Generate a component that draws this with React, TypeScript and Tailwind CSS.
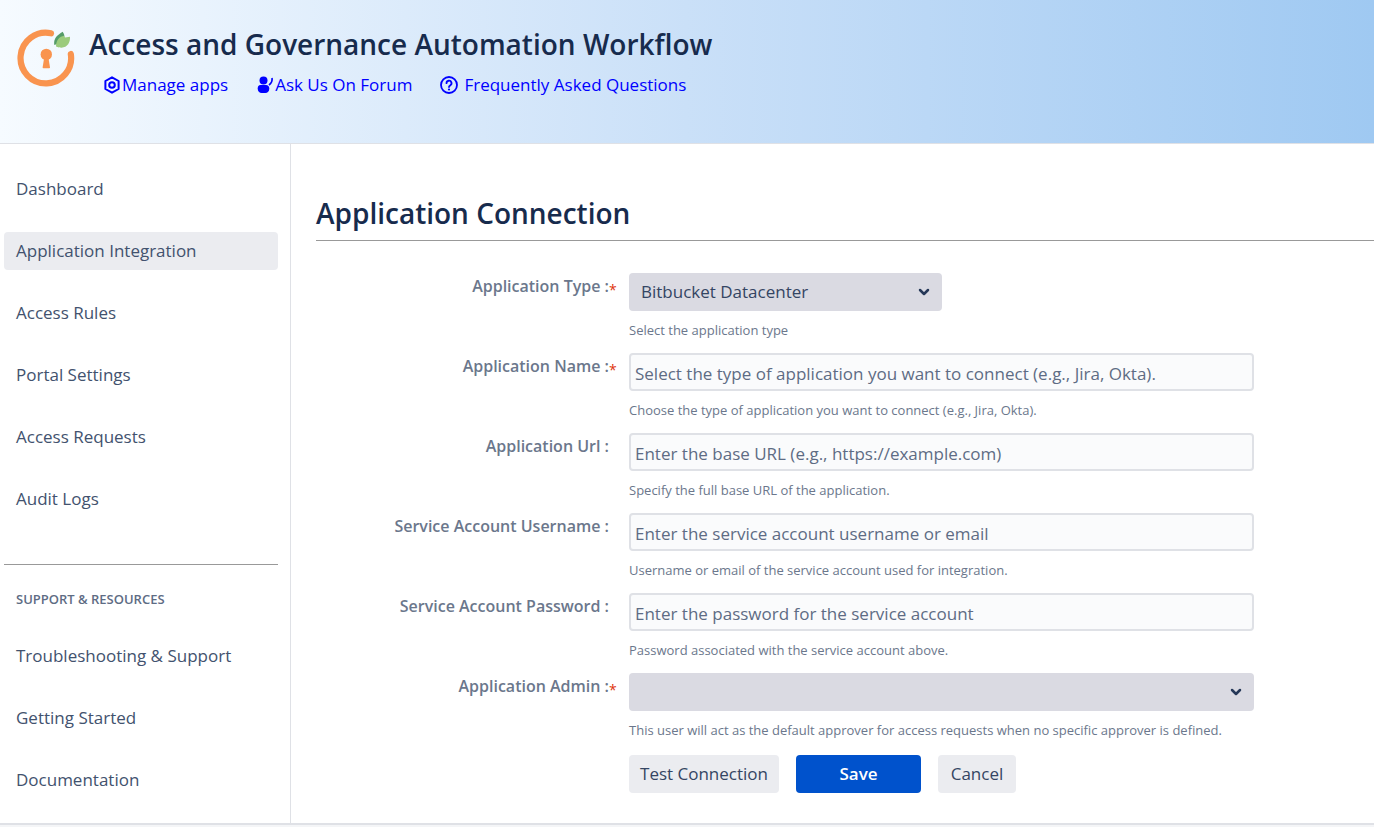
import React from "react";

const mainLinks = [
  "Dashboard",
  "Application Integration",
  "Access Rules",
  "Portal Settings",
  "Access Requests",
  "Audit Logs",
];

const supportLinks = [
  "Troubleshooting & Support",
  "Getting Started",
  "Documentation",
];

const Logo = () => (
  <svg width="58" height="58" viewBox="0 0 58 58" fill="none" aria-hidden="true">
    <path
      d="M34 4.300A25.300 25.300 0 1 0 53.800 25"
      stroke="#f9944f"
      strokeWidth="6.200"
      strokeLinecap="round"
    />
    <circle cx="29.300" cy="25.400" r="5.700" fill="#f9944f" />
    <path d="M27.300 28h4l1.700 10.600q0 .7-.8.700h-5.800q-.8 0-.8-.7z" fill="#f9944f" />
    <path d="M37.300 16C36.200 9.500 40 6.500 45.700 2.800C49.500 8 47 13 37.300 16Z" fill="#559c68" />
    <path d="M39 17.500C39 11 42.500 7.500 47 6.800L48 8.500L53 7.800C53.500 14.500 49 21.500 39 17.500Z" fill="#9bcb7c" />
  </svg>
);

const GearIcon = () => (
  <svg width="18" height="18" viewBox="0 0 18 18" fill="none" stroke="currentColor" strokeWidth="2" strokeLinejoin="round" aria-hidden="true">
    <path d="M9 1.300L15.600 5v8L9 16.700L2.400 13V5z" />
    <circle cx="9" cy="9" r="2.800" />
  </svg>
);

const PersonIcon = () => (
  <svg width="18" height="18" viewBox="0 0 18 18" fill="currentColor" aria-hidden="true">
    <circle cx="7.500" cy="4.500" r="4" />
    <path d="M4.500 9h5.500c2 0 3.300 1.500 3.300 3.400 0 2.800-1.600 4.600-4 4.600H5.700c-2.400 0-4-1.800-4-4.600C1.700 10.500 2.600 9 4.500 9z" />
    <path d="M16 2c.5 3-.6 5.200-3 7" fill="none" stroke="currentColor" strokeWidth="1.700" />
  </svg>
);

const QuestionIcon = () => (
  <svg width="18" height="18" viewBox="0 0 18 18" fill="none" stroke="currentColor" strokeWidth="1.800" aria-hidden="true">
    <circle cx="9" cy="9" r="8" />
    <path d="M6.500 7.200a2.500 2.500 0 1 1 3.700 2.200c-.8.5-1.200.8-1.200 1.700" strokeLinecap="round" />
    <circle cx="9" cy="13.500" r="1.100" fill="currentColor" stroke="none" />
  </svg>
);

const Chevron = () => (
  <svg
    className="pointer-events-none absolute right-3 top-1/2 -translate-y-1/2 text-[#253858]"
    width="12"
    height="10"
    viewBox="0 0 12 10"
    fill="none"
    stroke="currentColor"
    strokeWidth="2.500"
    strokeLinecap="round"
    strokeLinejoin="round"
    aria-hidden="true"
  >
    <path d="M2 3L6 7L10 3" />
  </svg>
);

type FieldProps = {
  id: string;
  label: string;
  help: string;
  required?: boolean;
  children: React.ReactNode;
};

const Field = ({ id, label, help, required, children }: FieldProps) => (
  <div className="flex gap-3">
    <div className="flex w-[301px] shrink-0 justify-end pt-px text-[#6b778c]">
      <label htmlFor={id} className="text-base leading-6 font-semibold">
        {label} :
      </label>
      <span className="w-2 pt-1 text-sm leading-6 text-[#de350b]">
        {required && "*"}
      </span>
    </div>
    <div className="max-w-[625px] flex-1">
      {children}
      <p className="mt-[6px] mb-[10px] text-[13px] leading-[26px] text-[#6b778c]">{help}</p>
    </div>
  </div>
);

const inputClass =
  "block h-[38px] w-full rounded-[4px] border-2 border-[#dfe1e6] bg-[#fafbfc] px-1 pt-0.5 text-[17px] text-[#172b4d] placeholder:text-[#5e6c84]";
const selectClass =
  "block h-[38px] w-full appearance-none rounded-[4px] bg-[#dadae2] px-3 text-[17px] text-[#344563]";

const SideLink = ({ text, active }: { text: string; active?: boolean }) => (
  <a
    href="#"
    className={
      active
        ? "block rounded-[4px] bg-[#ebecf0] px-3 text-[17px] leading-[38px] text-[#42526e]"
        : "block rounded-[4px] px-3 text-[17px] leading-[38px] text-[#42526e]"
    }
  >
    {text}
  </a>
);

const App = () => {
  return (
    <div className="flex min-h-screen flex-col bg-[#f4f5f7] font-['Segoe_UI','Open_Sans',sans-serif]">
      <header className="flex h-36 gap-[14px] border-b border-[#dfe1e6] bg-linear-to-r from-[#f6fbff] via-[#cae0f8] to-[#9fc9f2] px-[17px] pt-[29px]">
        <Logo />
        <div>
          <h1 className="text-[28px] leading-[30px] font-semibold text-[#172b4d]">
            Access and Governance Automation Workflow
          </h1>
          <nav className="flex gap-7 pt-[14px] pl-[14px] text-[17px] leading-6 text-[#0000ff]">
            <a href="#" className="flex items-center gap-px">
              <GearIcon />
              Manage apps
            </a>
            <a href="#" className="flex items-center gap-px">
              <PersonIcon />
              Ask Us On Forum
            </a>
            <a href="#" className="flex items-center gap-[6px]">
              <QuestionIcon />
              Frequently Asked Questions
            </a>
          </nav>
        </div>
      </header>

      <div className="flex border-b-2 border-[#dfe1e6] bg-white">
        <aside className="w-[291px] shrink-0 border-r border-[#dfe1e6] pt-[26px] pr-3 pb-6 pl-1">
          <nav className="flex flex-col gap-6">
            {mainLinks.map((text) => (
              <SideLink key={text} text={text} active={text === "Application Integration"} />
            ))}
          </nav>
          <hr className="mt-[46px] border-[#999999]" />
          <h2 className="px-3 pt-[22px] text-[13px] leading-6 font-semibold text-[#5e6c84]">
            SUPPORT & RESOURCES
          </h2>
          <nav className="flex flex-col gap-6 pt-[26px]">
            {supportLinks.map((text) => (
              <SideLink key={text} text={text} />
            ))}
          </nav>
        </aside>

        <main className="flex-1 pt-[52px] pl-[25px]">
          <h2 className="border-b border-[#999999] pb-[10px] text-[28px] leading-[34px] font-semibold text-[#172b4d]">
            Application Connection
          </h2>
          <form className="pt-8">
            <Field id="type" label="Application Type" help="Select the application type" required>
              <div className="relative w-1/2">
                <select id="type" className={selectClass}>
                  <option>Bitbucket Datacenter</option>
                </select>
                <Chevron />
              </div>
            </Field>
            <Field
              id="name"
              label="Application Name"
              help="Choose the type of application you want to connect (e.g., Jira, Okta)."
              required
            >
              <input
                id="name"
                type="text"
                placeholder="Select the type of application you want to connect (e.g., Jira, Okta)."
                className={inputClass}
              />
            </Field>
            <Field id="url" label="Application Url" help="Specify the full base URL of the application.">
              <input
                id="url"
                type="text"
                placeholder="Enter the base URL (e.g., https://example.com)"
                className={inputClass}
              />
            </Field>
            <Field
              id="username"
              label="Service Account Username"
              help="Username or email of the service account used for integration."
            >
              <input
                id="username"
                type="text"
                placeholder="Enter the service account username or email"
                className={inputClass}
              />
            </Field>
            <Field
              id="password"
              label="Service Account Password"
              help="Password associated with the service account above."
            >
              <input
                id="password"
                type="password"
                placeholder="Enter the password for the service account"
                className={inputClass}
              />
            </Field>
            <Field
              id="admin"
              label="Application Admin"
              help="This user will act as the default approver for access requests when no specific approver is defined."
              required
            >
              <div className="relative">
                <select id="admin" className={selectClass}>
                  <option></option>
                </select>
                <Chevron />
              </div>
            </Field>
            <div className="flex gap-[17px] pt-0.5 pl-[313px] text-[17px] leading-[38px] text-[#344563]">
              <button type="button" className="w-[150px] rounded-[4px] bg-[#ebecf0]">
                Test Connection
              </button>
              <button type="submit" className="w-[125px] rounded-[4px] bg-[#0052cc] font-semibold text-white">
                Save
              </button>
              <button type="button" className="w-[78px] rounded-[4px] bg-[#ebecf0]">
                Cancel
              </button>
            </div>
          </form>
        </main>
      </div>
    </div>
  );
};

export default App;
